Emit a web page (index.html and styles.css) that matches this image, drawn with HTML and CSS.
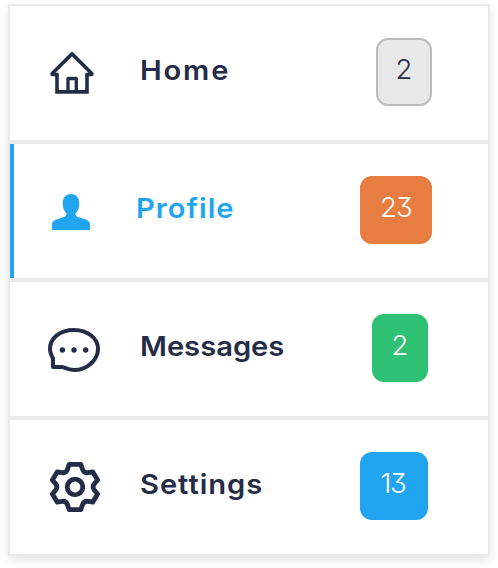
FILE: index.html
```html
<!DOCTYPE html>
<html lang="en">
<head>
<meta charset="utf-8">
<title>Menu</title>
<link rel="stylesheet" href="styles.css">
</head>
<body>
<ul class="menu">
  <li class="item home">
    <svg class="icon" viewBox="0 0 56 56" fill="none" stroke="currentColor" stroke-width="3.600" stroke-linejoin="round" stroke-linecap="round">
      <path stroke-linejoin="miter" d="M9 29.500V46.900H39V29.500"/>
      <path d="M20 46.500V33.500H28.300V46.500" stroke-width="3.300"/>
      <path d="M9 29.500H4.200V28.500L24 8.900 43.800 28.500V29.500H39"/>
    </svg>
    <span class="label">Home</span>
    <span class="badge grey">2</span>
  </li>
  <li class="item profile active">
    <svg class="icon" viewBox="0 0 56 56" fill="currentColor">
      <path d="M24 11C18.500 11 15.700 15 15.700 20.500C15.700 25 17.200 28.500 19.500 30.200C19.700 32.500 18.500 33.500 17 34L10 36.300C6.500 37.600 5 38.800 5 42V47H43V42C43 38.800 41.500 37.600 38 36.300L31 34C29.500 33.500 28.300 32.500 28.500 30.200C30.800 28.500 32.300 25 32.300 20.500C32.300 15 29.500 11 24 11Z" transform="translate(-1)"/>
    </svg>
    <span class="label">Profile</span>
    <span class="badge orange">23</span>
  </li>
  <li class="item messages">
    <svg class="icon" viewBox="0 0 56 56" fill="none" stroke="currentColor" stroke-width="4" stroke-linejoin="round">
      <path d="M5 46V37.500C3.600 34.800 2 31.700 2 28C2 17 12 9 26 9S50 17.500 50 28 39.500 49 26 49C21.500 49 18 47.300 14.500 46Z"/>
      <g fill="currentColor" stroke="none"><circle cx="14.400" cy="29" r="2.700"/><circle cx="26" cy="29" r="2.700"/><circle cx="37.700" cy="29" r="2.700"/></g>
    </svg>
    <span class="label">Messages</span>
    <span class="badge green">2</span>
  </li>
  <li class="item settings">
    <svg class="icon" viewBox="0 0 56 56" fill="none" stroke="currentColor" stroke-width="4.800" stroke-linejoin="round">
      <circle cx="27" cy="28" r="7.800"/>
      <path transform="translate(0 1)" d="M21.200 4.300H32.800L34.600 9.600Q36.200 13.300 40 12.600L44.700 11.800 49.600 20 46.200 24Q44 27 46.200 30L49.600 34 44.700 42.200 40 41.400Q36.200 40.700 34.600 44.400L32.800 49.700H21.200L19.400 44.400Q17.800 40.700 14 41.400L9.300 42.200 4.400 34 7.800 30Q10 27 7.800 24L4.400 20 9.300 11.800 14 12.600Q17.800 13.300 19.400 9.600Z"/>
    </svg>
    <span class="label">Settings</span>
    <span class="badge blue">13</span>
  </li>
</ul>
</body>
</html>
```
FILE: styles.css
```css
* { box-sizing: border-box; }

body {
  margin: 0;
  padding: 4px 8px 12px;
  background: #fff;
  font-family: Inter, "Liberation Sans", sans-serif;
}

.menu {
  list-style: none;
  margin: 0;
  padding: 0;
  width: 482px;
  box-shadow: 0 4px 10px rgba(0, 0, 0, .11);
}

.item {
  display: flex;
  align-items: center;
  height: 138px;
  padding: 0 56px 0 38px;
  border: 2px solid #eaeaea;
  background: #fff;
  color: #252c48;
}

.active {
  color: #22a5f1;
  box-shadow: inset 4px 0 #22a5f1;
}

.icon {
  flex: none;
  width: 56px;
  height: 56px;
}

.label {
  margin: -7px 0 0 36px;
  font-size: 27.500px;
  font-weight: 600;
  line-height: 36px;
  transform: scaleX(1.060);
  transform-origin: left;
}

.home .label { letter-spacing: 1.700px; }
.profile .label { margin-left: 32px; letter-spacing: .95px; }
.messages .label { letter-spacing: 0; }
.settings .label { letter-spacing: .9px; }

.badge {
  margin: -2px 0 0 auto;
  width: 56px;
  height: 68px;
  border-radius: 12px;
  color: #fff;
  font-size: 27.500px;
  font-weight: 350;
  line-height: 62px;
  text-align: center;
  font-feature-settings: "cv09";
}

.grey {
  border: 2px solid #bcbcbc;
  background: #e8e8e8;
  color: #252c48;
  line-height: 58px;
}

.orange { width: 72px; background: #e77d41; letter-spacing: -.7px; }
.green { margin-right: 4px; background: #2fc173; }
.blue { width: 68px; margin-right: 4px; padding-right: 2px; background: #22a5f1; letter-spacing: -1.300px; }
```
